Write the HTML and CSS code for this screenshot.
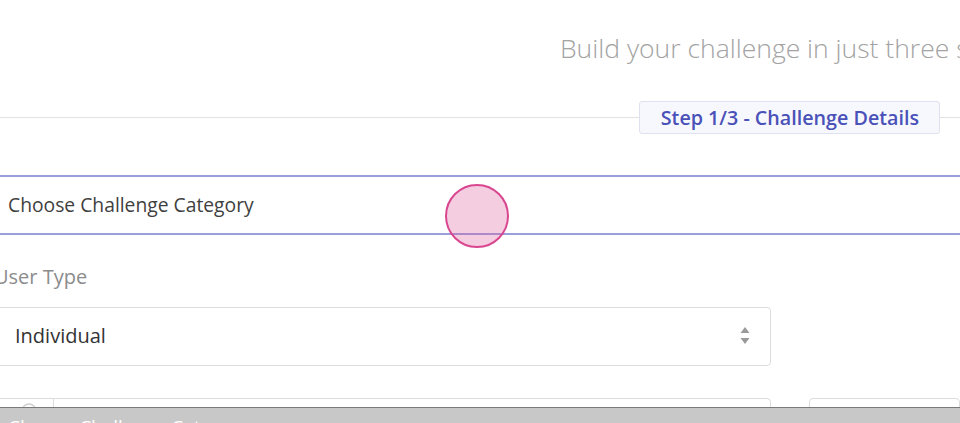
FILE: index.html
```html
<!DOCTYPE html>
<html>
<head>
<meta charset="utf-8">
<link rel="stylesheet" href="styles.css">
</head>
<body>
<div class="page">
  <h1 class="title">Build your challenge in just three steps</h1>
  <div class="step-row">
    <span class="step-line"></span>
    <span class="step-badge">Step 1/3 - Challenge Details</span>
    <span class="step-line short"></span>
  </div>
  <div class="category">Choose Challenge Category</div>
  <div class="field">
    <label class="label">User Type</label>
    <div class="select">
      <span>Individual</span>
      <svg class="arrows" width="10" height="20" viewBox="0 0 10 20"><path d="M5 1 L9.5 7 L0.5 7 Z" fill="#9a9a9a"/><path d="M0.5 12 L9.5 12 L5 18 Z" fill="#9a9a9a"/></svg>
    </div>
  </div>
  <div class="row">
    <div class="box left">
      <svg class="box-icon" width="20" height="12" viewBox="0 0 20 12"><path d="M3 10 C3 4 7 2 10 2 C13 2 17 4 17 10" fill="none" stroke="#cfcfcf" stroke-width="1.5"/></svg>
      <span class="sep"></span>
    </div>
    <div class="box right"></div>
  </div>
</div>
<div class="touch"></div>
<div class="bottom-bar"><span>Choose Challenge Category</span></div>
</body>
</html>
```
FILE: styles.css
```css
html, body {
  margin: 0;
  padding: 0;
  background: #fff;
  width: 960px;
  height: 423px;
  overflow: hidden;
  font-family: "Open Sans", "Liberation Sans", sans-serif;
}
.page {
  position: relative;
}
.title {
  margin: 0;
  padding: 30px 0 0 560px;
  font-size: 26.5px;
  font-weight: 300;
  line-height: 36px;
  color: #a3a3a3;
  white-space: nowrap;
}
.step-row {
  display: flex;
  align-items: center;
  margin-top: 35px;
  height: 33px;
}
.step-line {
  flex: 1;
  height: 1px;
  background: #e3e3e3;
}
.step-line.short {
  flex: 0 0 20px;
}
.step-badge {
  box-sizing: border-box;
  height: 33px;
  line-height: 31px;
  padding: 0 20px 0 21px;
  border: 1px solid #dfe2ee;
  border-radius: 3px;
  background: #f7f8fd;
  color: #4a51b8;
  font-size: 19.7px;
  font-weight: 600;
  white-space: nowrap;
}
.category {
  margin-top: 41px;
  box-sizing: border-box;
  height: 60px;
  border-top: 2px solid #9a9edb;
  border-bottom: 2px solid #9a9edb;
  padding-left: 8px;
  line-height: 56px;
  font-size: 19.3px;
  color: #3f3f3f;
}
.field {
  margin-top: 30px;
}
.label {
  display: block;
  margin-left: -6px;
  font-size: 20px;
  line-height: 24px;
  color: #8c8c8c;
}
.select {
  margin-top: 18px;
  margin-left: -10px;
  width: 781px;
  box-sizing: border-box;
  height: 59px;
  border: 1px solid #dcdcdc;
  border-radius: 4px;
  display: flex;
  align-items: center;
  justify-content: space-between;
  padding: 0 20px 2px 24px;
  font-size: 20px;
  color: #333;
}
.arrows {
  display: block;
}
.row {
  display: flex;
  gap: 38px;
  margin-top: 32px;
  margin-left: -10px;
}
.box {
  box-sizing: border-box;
  height: 59px;
  border: 1px solid #dcdcdc;
  border-radius: 4px;
  display: flex;
  align-items: flex-start;
}
.box.left {
  width: 781px;
  padding-left: 28px;
}
.box.right {
  flex: 1;
}
.box-icon {
  margin-top: 3px;
}
.sep {
  width: 1px;
  height: 40px;
  background: #dcdcdc;
  margin-left: 14px;
}
.touch {
  position: absolute;
  left: 445px;
  top: 184px;
  width: 64px;
  height: 64px;
  box-sizing: border-box;
  border-radius: 50%;
  border: 2px solid #d9468f;
  background: rgba(220, 90, 155, 0.3);
}
.bottom-bar {
  position: fixed;
  left: 0;
  right: 0;
  top: 407px;
  height: 16px;
  background: #c8c8c8;
  border-top: 1px solid #7a7a7a;
  overflow: hidden;
}
.bottom-bar span {
  display: block;
  padding-left: 8px;
  padding-top: 7px;
  font-size: 19px;
  line-height: 24px;
  color: #fff;
}
```
